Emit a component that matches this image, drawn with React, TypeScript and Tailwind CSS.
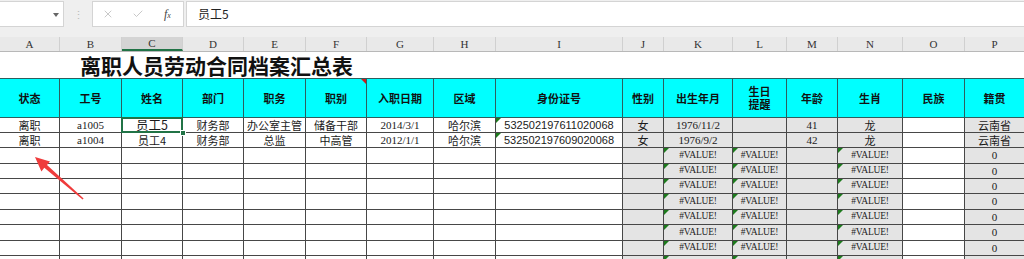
import React from 'react';
import { X, Check } from 'lucide-react';

const letters = [...'ABCDEFGHIJKLMNOP'.split(''), ''];
const gridCols =
  'grid grid-cols-[60px_62px_61px_61px_62px_61px_67px_62px_127px_41px_69px_54px_51px_65px_62px_60px_40px]';

const headers = ['状态', '工号', '姓名', '部门', '职务', '职别', '入职日期', '区域', '身份证号', '性别', '出生年月', '生日|提醒', '年龄', '生肖', '民族', '籍贯', ''];
const grayCols = [9, 10, 11, 12, 13, 15];

const filled = [
  ['离职', 'a1005', '员工5', '财务部', '办公室主管', '储备干部', '2014/3/1', '哈尔滨', '532502197611020068', '女', '1976/11/2', '', '41', '龙', '', '云南省', ''],
  ['离职', 'a1004', '员工4', '财务部', '总监', '中高管', '2012/1/1', '哈尔滨', '532502197609020068', '女', '1976/9/2', '', '42', '龙', '', '云南省', ''],
];
const emptyRow = ['', '', '', '', '', '', '', '', '', '', '#VALUE!', '#VALUE!', '', '#VALUE!', '', '0', ''];
const lastRow = Array(17).fill('');
const rowHeights = [15, 15, 16, 15, 15, 16, 15, 16, 15, 15];

const cjk = /[\u4e00-\u9fff]/;

function cellText(v: string, big: boolean) {
  if (!v) return null;
  if (cjk.test(v))
    return (
      <span className={`font-['Noto_Sans_CJK_SC',sans-serif] leading-none text-[#1a1a1a] ${big ? 'text-[12.5px]' : 'text-[11px]'}`}>{v}</span>
    );
  if (v.startsWith('#'))
    return (
      <span className="font-['Liberation_Serif',serif] text-[9.5px] leading-none tracking-[-0.2px] text-[#222]">{v}</span>
    );
  if (v.length > 12)
    return <span className="font-['Liberation_Sans',sans-serif] text-[11px] leading-none text-[#1a1a1a]">{v}</span>;
  return <span className="font-['Liberation_Serif',serif] text-[11px] leading-none text-[#1a1a1a]">{v}</span>;
}

const GreenTri = () => (
  <span className="absolute left-0 top-0 h-0 w-0 border-r-[5px] border-t-[5px] border-r-transparent border-t-[#1d7a1d]" />
);

const App: React.FC = () => {
  const rows = [...filled, ...Array(7).fill(emptyRow), lastRow] as string[][];

  return (
    <div className="relative h-[259px] w-[1024px] overflow-hidden bg-white">
      {/* formula bar */}
      <div className="flex h-[37px] items-start bg-[#efefef] pt-px">
        <div className="relative h-[26px] w-[64px] border border-l-0 border-[#d4d4d4] bg-white">
          <span className="absolute right-[4px] top-[11px] h-0 w-0 border-x-[3px] border-t-[4px] border-x-transparent border-t-[#666]" />
        </div>
        <div className="flex h-[26px] w-[28px] items-center justify-center text-[11px] leading-none text-[#bbb]">⋮</div>
        <div className="flex h-[26px] w-[92px] items-center border border-[#d4d4d4] bg-white">
          <X className="ml-[9px] h-[12px] w-[12px] text-[#b5b5b5]" strokeWidth={1.5} />
          <Check className="ml-[18px] h-[12px] w-[12px] text-[#b5b5b5]" strokeWidth={1.5} />
          <span className="ml-[20px] font-['Liberation_Serif',serif] text-[12px] italic leading-none text-[#444]">
            f<span className="text-[8px]">x</span>
          </span>
        </div>
        <div className="ml-[2px] flex h-[26px] flex-1 items-center border border-r-0 border-[#d4d4d4] bg-white pl-[11px]">
          <span className="font-['Noto_Sans_CJK_SC',sans-serif] text-[12px] leading-none text-[#222]">员工5</span>
        </div>
      </div>

      {/* column letters */}
      <div className={`${gridCols} h-[15px] border-b border-[#b8b8b8] bg-[#e9e9e9]`}>
        {letters.map((l, i) => (
          <div
            key={i}
            className={`flex items-center justify-center border-r border-[#d0d0d0] font-['Liberation_Serif',serif] text-[11px] leading-none text-[#333] ${
              i === 2 ? 'border-b-2 border-b-[#217346] bg-[#d4d4d4]' : ''
            }`}
          >
            {l}
          </div>
        ))}
      </div>

      {/* title */}
      <div className="flex h-[26px] items-center pl-[80px]">
        <span className="font-['Noto_Sans_CJK_SC',sans-serif] text-[21px] font-bold leading-none text-[#111]">
          离职人员劳动合同档案汇总表
        </span>
      </div>

      {/* header row */}
      <div className={`${gridCols} h-[40px] border-t border-[#2d5e5e]`}>
        {headers.map((h, i) => (
          <div
            key={i}
            className={`relative flex flex-col items-center justify-center border-r border-b border-[#2d5e5e] font-['Noto_Sans_CJK_SC',sans-serif] text-[11px] font-bold text-[#111] ${
              i < 16 ? 'bg-[#00ffff]' : 'bg-white'
            }`}
          >
            {h.split('|').map((p) => (
              <span key={p} className="block h-[13px] leading-[13px]">
                {p}
              </span>
            ))}
            {i === 5 && (
              <span className="absolute right-0 top-0 h-0 w-0 border-l-[5px] border-t-[5px] border-l-transparent border-t-[#d01c1c]" />
            )}
          </div>
        ))}
      </div>

      {/* data rows */}
      {rows.map((r, ri) => (
        <div key={ri} className={gridCols} style={{ height: rowHeights[ri] }}>
          {r.map((v, ci) => {
            const gray = grayCols.includes(ci);
            const tri = (ri < 2 && ci === 8) || (ri >= 2 && (ci === 10 || ci === 11 || ci === 13));
            const selected = ri === 0 && ci === 2;
            return (
              <div
                key={ci}
                className={`relative flex items-center justify-center whitespace-nowrap border-r border-b border-[#474747] ${
                  gray ? 'bg-[#e4e4e4]' : 'bg-white'
                }`}
              >
                {tri && <GreenTri />}
                {cellText(v, selected)}
                {selected && (
                  <>
                    <span className="absolute -bottom-px -left-px -right-px -top-px border-2 border-[#217346]" />
                    <span className="absolute -bottom-[4px] -right-[4px] z-10 h-[6px] w-[6px] border border-white bg-[#217346]" />
                  </>
                )}
              </div>
            );
          })}
        </div>
      ))}

      {/* annotation arrow */}
      <svg className="pointer-events-none absolute left-0 top-0" width="1024" height="259" viewBox="0 0 1024 259">
        <polygon points="35,157 50,161.5 47,164.9 83.6,198.4 82.6,199.6 44.3,167.8 41.4,171.4" fill="#ef3b3b" />
      </svg>
    </div>
  );
};

export default App;
